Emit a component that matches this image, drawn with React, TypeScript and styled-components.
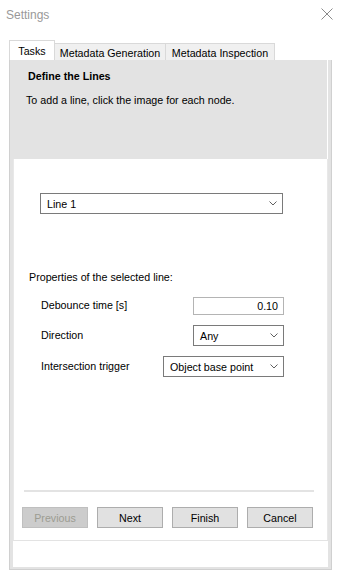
import React from "react";
import styled, { createGlobalStyle } from "styled-components";

const GlobalStyle = createGlobalStyle`
  html, body {
    margin: 0;
    padding: 0;
    background: #ffffff;
  }
  body {
    font-family: "Liberation Sans", Arial, sans-serif;
    font-size: 10.7px;
    color: #000;
  }
`;

const Window = styled.div`
  width: 342px;
  height: 581px;
  background: #ffffff;
  display: flex;
  flex-direction: column;
  box-sizing: border-box;
  padding: 0 10px 11px 9px;
`;

const TitleBar = styled.div`
  height: 28px;
  display: flex;
  align-items: center;
  justify-content: space-between;
  margin-left: -3px;
  margin-right: -1px;
`;

const Title = styled.span`
  font-size: 12px;
  color: #999999;
  margin-top: 1px;
`;

const TabStrip = styled.div`
  margin-top: 12px;
  height: 20px;
  display: flex;
  align-items: flex-end;
`;

const Tab = styled.div<{ active?: boolean; w: number }>`
  box-sizing: border-box;
  height: ${({ active }) => (active ? "20px" : "17px")};
  width: ${({ w }) => w}px;
  display: flex;
  align-items: center;
  justify-content: center;
  padding-top: ${({ active }) => (active ? "0" : "1px")};
  background: ${({ active }) => (active ? "#ffffff" : "#f0f0f0")};
  border: 1px solid #d9d9d9;
  border-bottom: none;
  border-left-width: ${({ active }) => (active ? "1px" : "0")};
  white-space: nowrap;
  position: relative;
  z-index: ${({ active }) => (active ? 1 : 0)};
`;

const TabPage = styled.div`
  flex: 1;
  display: flex;
  flex-direction: column;
  box-sizing: border-box;
  background: #e3e3e3;
  border: 1px solid #d0d0d0;
  border-top: none;
  padding: 0 3px 2px 3px;
`;

const Header = styled.div`
  height: 99px;
  box-sizing: border-box;
  padding: 10px 0 0 13px;
  background: #e3e3e3;
  border-right: 1px solid #ffffff;
`;

const HeaderTitle = styled.div`
  font-weight: bold;
  padding-left: 2px;
  line-height: 13px;
`;

const HeaderText = styled.div`
  margin-top: 11px;
  line-height: 13px;
`;

const Content = styled.div`
  flex: 1;
  background: #ffffff;
  display: flex;
  flex-direction: column;
  border-left: 1px solid #e8e8e8;
  border-right: 1px solid #e8e8e8;
`;

const Combo = styled.div<{ width: number }>`
  box-sizing: border-box;
  width: ${({ width }) => width}px;
  height: 21px;
  border: 1px solid #7a7a7a;
  background: #ffffff;
  display: flex;
  align-items: center;
  justify-content: space-between;
  padding: 0 5px 0 6px;
  white-space: nowrap;
`;

const LineCombo = styled(Combo)`
  margin: 34px 0 0 26px;
`;

const SectionLabel = styled.div`
  margin: 57px 0 0 15px;
  line-height: 13px;
`;

const Rows = styled.div`
  margin: 13px 43px 0 27px;
  display: flex;
  flex-direction: column;
  gap: 10px;
`;

const Row = styled.div`
  display: flex;
  align-items: center;
  justify-content: space-between;

  & > span {
    margin-top: -2px;
  }
`;

const TextBox = styled.div`
  box-sizing: border-box;
  width: 91px;
  height: 18px;
  border: 1px solid #b4b4b4;
  display: flex;
  align-items: center;
  justify-content: flex-end;
  padding-right: 5px;
`;

const Spacer = styled.div`
  flex: 1;
`;

const Separator = styled.div`
  height: 2px;
  background: #e3e3e3;
  margin: 0 13px 0 10px;
`;

const ButtonBar = styled.div`
  display: flex;
  gap: 9px;
  margin: 15px 0 12px 8px;
`;

const Button = styled.div<{ disabled?: boolean }>`
  box-sizing: border-box;
  width: 66px;
  height: 21px;
  display: flex;
  align-items: center;
  justify-content: center;
  background: ${({ disabled }) => (disabled ? "#cccccc" : "#e1e1e1")};
  border: 1px solid ${({ disabled }) => (disabled ? "#bfbfbf" : "#adadad")};
  color: ${({ disabled }) => (disabled ? "#9c9c92" : "#000000")};
`;

const Footer = styled.div`
  height: 26px;
  background: #ffffff;
  border-top: 1px solid #e3e3e3;
`;

const Chevron = () => (
  <svg width="8" height="5" viewBox="0 0 8 5">
    <polyline points="0.5,0.5 4,4 7.5,0.5" fill="none" stroke="#606060" strokeWidth="1" />
  </svg>
);

const CloseIcon = () => (
  <svg width="12" height="12" viewBox="0 0 12 12">
    <path d="M0.5 0.5 L11.5 11.5 M11.5 0.5 L0.5 11.5" stroke="#8a8a8a" strokeWidth="1" fill="none" />
  </svg>
);

export default function App() {
  return (
    <>
      <GlobalStyle />
      <Window>
        <TitleBar>
          <Title>Settings</Title>
          <CloseIcon />
        </TitleBar>

        <TabStrip>
          <Tab active w={46}>Tasks</Tab>
          <Tab w={111}>Metadata Generation</Tab>
          <Tab w={109}>Metadata Inspection</Tab>
        </TabStrip>

        <TabPage>
          <Header>
            <HeaderTitle>Define the Lines</HeaderTitle>
            <HeaderText>To add a line, click the image for each node.</HeaderText>
          </Header>

          <Content>
            <LineCombo width={243}>
              <span>Line 1</span>
              <Chevron />
            </LineCombo>

            <SectionLabel>Properties of the selected line:</SectionLabel>

            <Rows>
              <Row>
                <span>Debounce time [s]</span>
                <TextBox>0.10</TextBox>
              </Row>
              <Row>
                <span>Direction</span>
                <Combo width={91}>
                  <span>Any</span>
                  <Chevron />
                </Combo>
              </Row>
              <Row>
                <span>Intersection trigger</span>
                <Combo width={121}>
                  <span>Object base point</span>
                  <Chevron />
                </Combo>
              </Row>
            </Rows>

            <Spacer />
            <Separator />
            <ButtonBar>
              <Button disabled>Previous</Button>
              <Button>Next</Button>
              <Button>Finish</Button>
              <Button>Cancel</Button>
            </ButtonBar>
          </Content>

          <Footer />
        </TabPage>
      </Window>
    </>
  );
}
